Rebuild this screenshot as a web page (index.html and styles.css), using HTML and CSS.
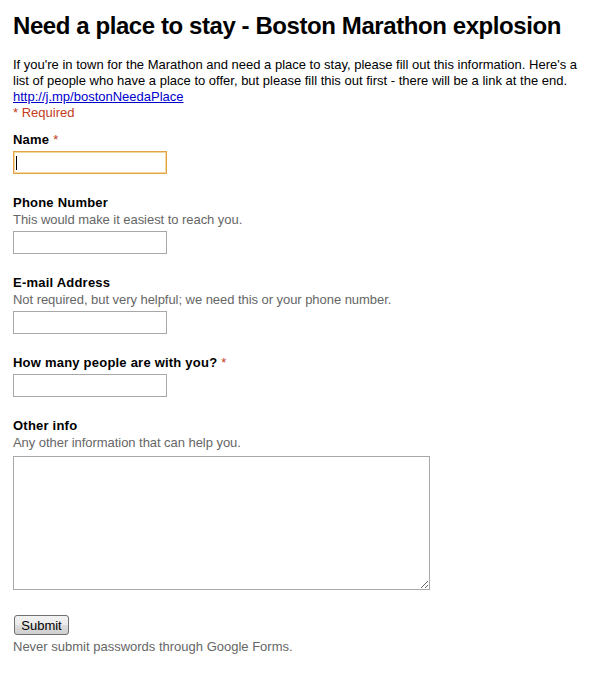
FILE: index.html
```html
<!DOCTYPE html>
<html lang="en">
<head>
<meta charset="utf-8">
<title>Need a place to stay - Boston Marathon explosion</title>
<link rel="stylesheet" href="styles.css">
</head>
<body>
<div class="form">
  <h1 class="title">Need a place to stay - Boston Marathon explosion</h1>
  <div class="desc">If you're in town for the Marathon and need a place to stay, please fill out this information. Here's a list of people who have a place to offer, but please fill this out first - there will be a link at the end.<br><a href="#">http://j.mp/bostonNeedaPlace</a></div>
  <div class="req">* Required</div>

  <div class="item first">
    <label class="label" for="f1">Name <span class="star">*</span></label>
    <div class="field-wrap">
      <input id="f1" class="text focused" type="text">
      <span class="caret"></span>
    </div>
  </div>

  <div class="item">
    <label class="label" for="f2">Phone Number</label>
    <div class="help">This would make it easiest to reach you.</div>
    <input id="f2" class="text" type="text">
  </div>

  <div class="item">
    <label class="label" for="f3">E-mail Address</label>
    <div class="help">Not required, but very helpful; we need this or your phone number.</div>
    <input id="f3" class="text" type="text">
  </div>

  <div class="item">
    <label class="label" for="f4">How many people are with you? <span class="star">*</span></label>
    <input id="f4" class="text" type="text">
  </div>

  <div class="item">
    <label class="label" for="f5">Other info</label>
    <div class="help">Any other information that can help you.</div>
    <textarea id="f5" class="area"></textarea>
  </div>

  <div class="submit-row">
    <button class="btn" type="button">Submit</button>
  </div>
  <div class="footer">Never submit passwords through Google Forms.</div>
</div>
</body>
</html>
```
FILE: styles.css
```css
html, body {
  margin: 0;
  padding: 0;
  background: #ffffff;
}
body {
  font-family: "Liberation Sans", Arial, sans-serif;
  font-size: 13px;
  color: #000;
}
.form {
  padding: 12px 13px 0 13px;
}
.title {
  margin: 0 0 17px 0;
  font-size: 24px;
  line-height: 28px;
  font-weight: bold;
  letter-spacing: -0.42px;
}
.desc {
  line-height: 16px;
}
.desc a {
  color: #0000cc;
  text-decoration: underline;
}
.req {
  line-height: 16px;
  color: #c43b1d;
}
.item {
  margin-top: 21px;
  display: flex;
  flex-direction: column;
  align-items: flex-start;
}
.item.first {
  margin-top: 11px;
}
.label {
  display: block;
  font-weight: bold;
  line-height: 16px;
  letter-spacing: 0.22px;
}
.star {
  color: #c43b1d;
  font-weight: normal;
  letter-spacing: 0;
}
.help {
  color: #666;
  line-height: 17px;
  letter-spacing: -0.05px;
}
.field-wrap {
  position: relative;
  margin-top: 3px;
}
.text {
  display: block;
  box-sizing: border-box;
  width: 154px;
  height: 23px;
  margin: 3px 0 0 0;
  border: 1px solid #a8a8a8;
  padding: 2px 3px;
  font: 13px "Liberation Sans", Arial, sans-serif;
  background: #fff;
  outline: none;
}
.field-wrap .text {
  margin-top: 0;
}
.text.focused {
  border: 1px solid #e2a446;
  box-shadow: inset 0 0 0 1px #f4d7a0;
}
.caret {
  position: absolute;
  left: 3px;
  top: 5px;
  width: 1px;
  height: 14px;
  background: #000;
}
.area {
  display: block;
  box-sizing: border-box;
  width: 417px;
  height: 134px;
  margin: 5px 0 0 0;
  border: 1px solid #a8a8a8;
  padding: 2px;
  font: 13px "Liberation Sans", Arial, sans-serif;
  resize: both;
}
.submit-row {
  margin-top: 25px;
  padding-left: 1px;
}
.btn {
  display: block;
  box-sizing: border-box;
  width: 55px;
  height: 20px;
  padding: 0;
  border: 1px solid #707070;
  border-radius: 3px;
  background: linear-gradient(#f2f2f2 0%, #ebebeb 50%, #dddddd 51%, #cfcfcf 100%);
  font: 13px "Liberation Sans", Arial, sans-serif;
  color: #000;
}
.footer {
  margin-top: 4px;
  line-height: 16px;
  color: #666;
}
```
